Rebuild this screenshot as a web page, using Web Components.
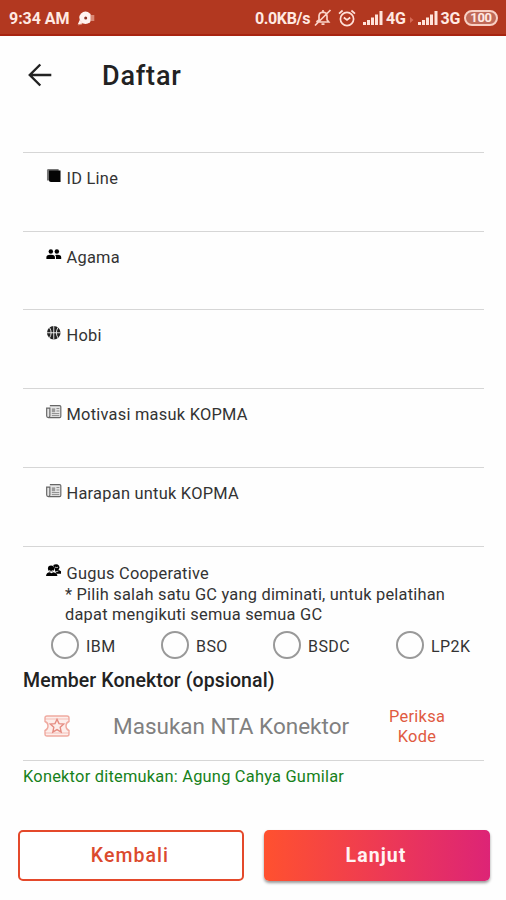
<!DOCTYPE html>
<html lang="id">
<head>
<meta charset="utf-8">
<title>Daftar</title>
<style>
body{margin:0;background:#fefefe;font-family:Roboto,"Noto Sans",sans-serif;color:#222}
</style>
</head>
<body>
<daftar-screen></daftar-screen>
<script>
const define=(name,html,setup)=>{
  const t=document.createElement('template');t.innerHTML=html;
  customElements.define(name,class extends HTMLElement{
    constructor(){super();this.attachShadow({mode:'open'}).append(t.content.cloneNode(true));}
    connectedCallback(){if(setup)setup(this,this.shadowRoot);}
  });
};
const icons={
  line:'<path d="M1 2.5Q1 1 2.5 1H13v12H1Z" fill="#777"/><path d="M3 2.500h12v12H5Q3 14.500 3 12.500Z" fill="#050505"/>',
  people:'<circle cx="5" cy="4.700" r="2.300"/><circle cx="11.200" cy="4.700" r="2.300"/><path d="M.4 12.500v-2.100Q.6 8 5 8q4 0 4.200 2.400v2.100ZM10.300 12.500v-2.400q-.1-1.200-1-1.900 6.200-.6 6.400 2.200v2.100Z"/>',
  ball:'<circle cx="8" cy="8" r="7" fill="#222"/><path d="M8 1v14M1 8h14M3.600 2.600q3.400 5.400 0 10.800M12.400 2.600q-3.400 5.400 0 10.800" fill="none" stroke="#fff" stroke-width=".9"/>',
  news:'<path d="M4 1.600h10q1.300 0 1.300 1.300v9.800q0 1.300-1.300 1.300H2.500Q.7 14 .7 12.500V4.200H4v8.300q0 1.400-1.500 1.400" fill="#e6e6e6" stroke="#666" stroke-width="1.200"/><path d="M6 4.500h3.500v4H6Z" fill="#999"/><path d="M10.800 4.700h3M10.800 7.200h3M6 9.900h7.700M6 12h7.700" stroke="#888" fill="none"/>',
  group:'<path d="M7.500 2q4-1.500 6 .8 1.300 2-.6 4.200l2.600 1.500V11h-5Z"/><circle cx="5.200" cy="5.800" r="3.200"/><path d="M0 13.500Q.3 9.800 4 9.500l1.500 1 2-1q4 .5 4.300 4Z"/><path d="M3.200 7.500q2 2.500 4 .2M9.200 4.200q1.500 1 3.300.1M9.800 9.300l3-1" fill="none" stroke="#fff" stroke-width=".8"/>'
};
define('status-bar',`<style>
:host{display:flex;box-sizing:border-box;height:36px;background:#b23820;border-bottom:2px solid #a82410;color:#ffe9e2;align-items:center;padding:4px 8px 0 9px;font-weight:700;font-size:16px;line-height:20px}
.time{width:68px;letter-spacing:-.05px}.right{margin-left:auto;display:flex;align-items:center}
svg{display:block;flex:none}.bat{display:flex;align-items:center;justify-content:center;box-sizing:border-box;width:34px;height:16px;border:2px solid #f8cfc3;border-radius:8px;background:#c06a58;font-size:13px;line-height:12px;margin:-2px 0 0 4px;letter-spacing:-.3px}
</style><span class="time">9:34 AM</span>
<svg width="20" height="18" viewBox="0 0 20 18"><circle cx="8.500" cy="7.800" r="6.200" fill="#fff3ef"/><path d="M5 11.500.8 15.500 5.200 14.500ZM13.500 5h3.800v6h-3.800Z" fill="#d98874"/><path d="M2.700 10 .7 14.500l5-1.200Z" fill="#fff3ef"/><circle cx="8.700" cy="8" r="1.500" fill="#8d3020"/></svg>
<div class="right"><span style="letter-spacing:-.35px">0.0KB/s</span>
<svg style="margin:-2px 0 0 4px" width="18" height="18" viewBox="0 0 18 18" fill="none" stroke="#fbd3c8" stroke-width="1.700"><path d="M2.500 13h12.200l-1.700-2.200V7Q12.800 3.300 9 3.100 5.200 3.300 5 7v3.800L2.500 13M7.500 15.200h3M9 3V1M1 16.500 16.500 1"/></svg>
<svg style="margin:-2px 0 0 6px" width="18" height="18" viewBox="0 0 18 18" fill="none" stroke="#ffe0d8" stroke-width="1.700"><circle cx="9" cy="10" r="6.600"/><path d="M5.800 8.500 9 11l3.200-2.500M1 4.700 4.600 1.500M13.400 1.500 17 4.700"/></svg>
<svg style="margin:-2px 0 0 7px" width="20" height="16" viewBox="0 0 20 16" fill="#ffe3da"><path d="M0 12h3v3H0ZM4 10h3v5H4ZM8 7.500h3V15H8ZM12 4.500h3V15h-3ZM16.500 1h3v14h-3Z"/></svg>
<span style="margin-left:3px;letter-spacing:-.3px">4G</span><svg width="12" height="8" viewBox="0 0 12 8"><path d="M4 2l3.500 3L4 8Z" fill="#d66b56"/></svg>
<svg style="margin-top:-2px" width="20" height="16" viewBox="0 0 20 16" fill="#ffe3da"><path d="M0 12h3v3H0ZM4 10h3v5H4ZM8 7.500h3V15H8ZM12 4.500h3V15h-3ZM16.500 1h3v14h-3Z"/></svg>
<span style="margin-left:3px;letter-spacing:-.3px">3G</span><span class="bat">100</span></div>`);
define('app-header',`<style>
:host{display:flex;height:78px;align-items:center;box-sizing:border-box;padding-left:28px}
h1{margin:1px 0 0 50px;font-size:27px;line-height:32px;font-weight:500;letter-spacing:.8px;color:#222}
</style><svg width="24" height="24" viewBox="0 0 24 24" fill="none" stroke="#222" stroke-width="2.400"><path d="M12.300 1.500 1.800 12l10.500 10.500M1.800 12h21.500"/></svg><h1><slot></slot></h1>`);
define('form-field',`<style>
:host{display:block;box-sizing:border-box;height:var(--h,79px);border-top:1px solid #d6d6d6;padding:16px 0 0 23px}
.l{display:flex;font-size:16.400px;line-height:20px;color:#333;gap:5px}svg{width:15.500px;height:15.500px;flex:none;margin:-1px 0 0 0}
span{letter-spacing:var(--ls,.25px);white-space:nowrap}
</style><div class="l"><svg viewBox="0 0 16 16"></svg><span><slot></slot></span></div><slot name="body"></slot>`,
(h,r)=>{r.querySelector('svg').innerHTML=icons[h.getAttribute('icon')];});
define('radio-option',`<style>
:host{display:flex;align-items:center;font-size:16px;line-height:20px;color:#333;gap:7px;white-space:nowrap;letter-spacing:.45px}
i{box-sizing:border-box;width:28px;height:28px;border:2.500px solid #999;border-radius:50%;flex:none;margin-top:-2px}
span{padding-top:1px}
</style><i></i><span><slot></slot></span>`);
define('code-input',`<style>
:host{display:grid;grid-template-columns:90px 246px 120px;align-items:center;height:68px;border-bottom:1px solid #d6d6d6;box-sizing:border-box}
svg{margin:-1px 0 0 21px;display:block}.p{font-size:22.500px;line-height:26px;color:#808080;letter-spacing:0;white-space:nowrap;margin-top:-2px}
.a{font-size:16.400px;line-height:20px;color:#e05a41;text-align:center;letter-spacing:.3px;justify-self:center;width:70px;margin:0 4px 0 0}
</style><svg width="26" height="22" viewBox="0 0 26 22" fill="#fdeeeb" stroke="#efaaa0" stroke-width="1.400"><path d="M3 1h20q2 0 2 2v3.500q-3 1-3 4.500t3 4.500V19q0 2-2 2H3q-2 0-2-2v-3.500q3-1 3-4.500T1 6.500V3q0-2 2-2Z"/><path d="M1 4h24M1 18h24" stroke-width=".7"/><path d="m13 4.300 2 4.300 4.700.5-3.500 3.200 1 4.700-4.200-2.400L8.800 17l1-4.700-3.500-3.200 4.700-.5Z" stroke="#e58c82"/></svg>
<span class="p"><slot></slot></span><span class="a"><slot name="action"></slot></span>`);
define('action-button',`<style>
:host{display:flex;align-items:center;justify-content:center;box-sizing:border-box;height:51px;border:2.500px solid #e4492b;border-radius:5px;color:#db4a2e;font-weight:500;font-size:19.500px;letter-spacing:1.050px;line-height:24px;background:#fff;padding:1px 2px 0 0}
:host([primary]){border:0;color:#fff3f3;background:linear-gradient(90deg,#ff512f,#dd2476);box-shadow:0 2px 3px #0006;font-weight:700}
</style><slot></slot>`);
define('daftar-screen',`<style>
:host{display:block;height:900px;overflow:hidden}
main{padding:38px 22px 0 23px}
.hint{font-size:16.400px;line-height:20px;color:#333;margin:1px 0 0 19px}
.hint span{display:block;white-space:nowrap;letter-spacing:.22px}
.radios{display:grid;grid-template-columns:110px 112px 123px auto;margin:8px 0 0 5px}
h2{margin:0;padding-top:10px;font-size:19.500px;line-height:24px;font-weight:500;letter-spacing:.09px;color:#222}
.found{font-size:16.400px;line-height:20px;color:#16811a;margin-top:6px;letter-spacing:.23px}
footer{display:grid;grid-template-columns:1fr 1fr;gap:20px;margin:43px -6px 0 -5px}
</style>
<status-bar></status-bar><app-header>Daftar</app-header>
<main>
<form-field icon="line">ID Line</form-field>
<form-field icon="people" style="--h:78px">Agama</form-field>
<form-field icon="ball">Hobi</form-field>
<form-field icon="news">Motivasi masuk KOPMA</form-field>
<form-field icon="news">Harapan untuk KOPMA</form-field>
<form-field icon="group" style="--h:auto;padding-top:17px">Gugus Cooperative<div slot="body" class="hint"><span>* Pilih salah satu GC yang diminati, untuk pelatihan</span><span>dapat mengikuti semua semua GC</span></div>
<div slot="body" class="radios"></div></form-field>
<h2>Member Konektor (opsional)</h2>
<code-input>Masukan NTA Konektor<span slot="action">Periksa Kode</span></code-input>
<div class="found">Konektor ditemukan: Agung Cahya Gumilar</div>
<footer><action-button>Kembali</action-button><action-button primary>Lanjut</action-button></footer>
</main>`,(h,r)=>{
  r.querySelector('.radios').innerHTML=['IBM','BSO','BSDC','LP2K'].map(x=>'<radio-option>'+x+'</radio-option>').join('');
});
</script>
</body>
</html>
